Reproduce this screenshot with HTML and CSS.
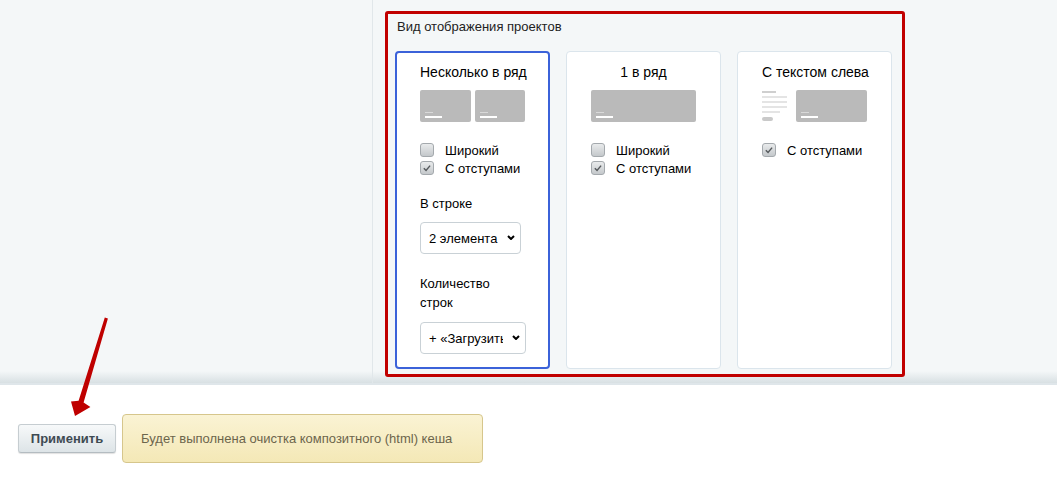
FILE: index.html
```html
<!DOCTYPE html>
<html lang="ru">
<head>
  <meta charset="UTF-8">
  <meta name="viewport" content="width=device-width, initial-scale=1.0">
  <title>Вид отображения проектов</title>
  <link rel="stylesheet" href="styles.css">
</head>
<body>

  <div class="workarea">
    <div class="sidebar"></div>

    <div class="content">
      <div class="panel">
        <div class="panel-title">Вид отображения проектов</div>

        <div class="views">
          <!-- несколько в ряд -->
          <div class="view active">
            <div class="view-title">Несколько в ряд</div>
            <div class="preview">
              <div class="thumb"><i class="l1"></i><i class="l2"></i></div>
              <div class="thumb"><i class="l1"></i><i class="l2"></i></div>
            </div>
            <div class="checks">
              <label class="check"><span class="box"></span>Широкий</label>
              <label class="check">
                <span class="box checked"><svg viewBox="0 0 14 14"><path d="M3.3 7.2 L5.9 9.8 L10.6 4.2"/></svg></span>С отступами
              </label>
            </div>
            <div class="field-label">В строке</div>
            <div class="select-wrap w1">
              <select class="select"><option>2 элемента</option></select>
              <svg class="chevron" viewBox="0 0 8 5"><path d="M1 1 L4 4 L7 1"/></svg>
            </div>
            <div class="field-label two">Количество<br>строк</div>
            <div class="select-wrap w2">
              <select class="select"><option>+ «Загрузить ещё»</option></select>
              <svg class="chevron" viewBox="0 0 8 5"><path d="M1 1 L4 4 L7 1"/></svg>
            </div>
          </div>

          <!-- 1 в ряд -->
          <div class="view">
            <div class="view-title">1 в ряд</div>
            <div class="preview">
              <div class="thumb"><i class="l1"></i><i class="l2"></i></div>
            </div>
            <div class="checks">
              <label class="check"><span class="box"></span>Широкий</label>
              <label class="check">
                <span class="box checked"><svg viewBox="0 0 14 14"><path d="M3.3 7.2 L5.9 9.8 L10.6 4.2"/></svg></span>С отступами
              </label>
            </div>
          </div>

          <!-- с текстом слева -->
          <div class="view">
            <div class="view-title">С текстом слева</div>
            <div class="preview">
              <div class="textlines">
                <i class="t-head"></i>
                <i class="t-line"></i>
                <i class="t-line"></i>
                <i class="t-line"></i>
                <i class="t-line short"></i>
                <i class="t-btn"></i>
              </div>
              <div class="thumb"><i class="l1"></i><i class="l2"></i></div>
            </div>
            <div class="checks">
              <label class="check">
                <span class="box checked"><svg viewBox="0 0 14 14"><path d="M3.3 7.2 L5.9 9.8 L10.6 4.2"/></svg></span>С отступами
              </label>
            </div>
          </div>
        </div>
      </div>
    </div>
  </div>

  <div class="footer">
    <button class="btn-apply">Применить</button>
    <div class="notice">Будет выполнена очистка композитного (html) кеша</div>
  </div>

  <svg class="arrow" viewBox="0 0 60 120">
    <polygon points="44.8,12.6 47.9,13.6 23.6,97.4 30.4,102 15,111 11,96.6 18.6,95.8"/>
  </svg>

</body>
</html>
```

FILE: styles.css
```css
body {
  margin: 0;
  background-color: #fff;
  font-family: "Liberation Sans", Arial, sans-serif;
  color: #000;
}

.workarea {
  display: flex;
  height: 385px;
  box-sizing: border-box;
  border-bottom: 2px solid #dfe6ea;
  background: linear-gradient(to bottom, #f4f7f8 0, #f4f7f8 371px, #d8e0e3 383px);
}

.sidebar {
  flex: none;
  width: 373px;
  box-sizing: border-box;
  border-right: 1px solid #e1e7ea;
}

.content {
  padding: 11px 0 0 12px;
}

.panel {
  width: 520px;
  box-sizing: border-box;
  border: 3px solid #c10000;
  border-radius: 3px;
  padding: 5px 10px 5px 7px;
  background-color: #f4f7f8;
}

.panel-title {
  font-size: 13px;
  line-height: 16px;
  color: #222;
  padding-left: 2px;
  margin-bottom: 16px;
}

.views {
  display: flex;
  gap: 16px;
}

.view {
  width: 155px;
  box-sizing: border-box;
  background-color: #fff;
  border: 1px solid #dbe5ec;
  border-radius: 4px;
  padding: 12px 24px 14px;
}

.view.active {
  border: 2px solid #3b62d9;
  padding: 11px 23px 13px;
}

.view-title {
  font-size: 14px;
  line-height: 17px;
  text-align: center;
  white-space: nowrap;
}

.preview {
  display: flex;
  gap: 4px;
  height: 32px;
  margin-top: 9px;
}

.thumb {
  flex: 1;
  display: flex;
  flex-direction: column;
  justify-content: flex-end;
  align-items: flex-start;
  padding: 0 0 4px 5px;
  background-color: #bababa;
  border-radius: 2px;
}

.thumb i {
  display: block;
}

.thumb .l1 {
  width: 8px;
  height: 1px;
  margin-bottom: 3px;
  background-color: #d9d9d9;
}

.thumb .l2 {
  width: 17px;
  height: 2px;
  background-color: #fff;
}

.textlines {
  flex: none;
  width: 25px;
  margin-right: 5px;
  display: flex;
  flex-direction: column;
  align-items: flex-start;
}

.textlines i {
  display: block;
}

.t-head {
  width: 14px;
  height: 2px;
  margin-top: 1px;
  background-color: #cfcfcf;
}

.t-line {
  width: 25px;
  height: 2px;
  margin-top: 3px;
  background-color: #e4e4e4;
}

.t-line.short {
  width: 18px;
}

.t-btn {
  width: 11px;
  height: 4px;
  margin-top: 4px;
  border-radius: 2px;
  background-color: #c9c9c9;
}

.checks {
  margin-top: 19px;
}

.check {
  display: flex;
  align-items: center;
  height: 18px;
  font-size: 13px;
  white-space: nowrap;
}

.box {
  flex: none;
  width: 14px;
  height: 14px;
  box-sizing: border-box;
  margin-right: 11px;
  border: 1px solid #a4a9ad;
  border-radius: 3px;
  background: linear-gradient(to bottom, #e9ebec, #c4c8cb);
}

.box svg {
  display: block;
  width: 12px;
  height: 12px;
}

.box svg path {
  fill: none;
  stroke: #55595c;
  stroke-width: 1.7;
}

.field-label {
  margin-top: 19px;
  font-size: 13px;
  line-height: 16px;
}

.field-label.two {
  margin-top: 20px;
  line-height: 19px;
}

.select-wrap {
  position: relative;
  margin-top: 10px;
  height: 32px;
}

.select-wrap.w1 {
  width: 101px;
}

.select-wrap.w2 {
  width: 106px;
}

.select {
  appearance: none;
  -webkit-appearance: none;
  width: 100%;
  height: 32px;
  box-sizing: border-box;
  padding: 0 22px 0 8px;
  border: 1px solid #c9d1d6;
  border-radius: 4px;
  background-color: #fff;
  font-family: "Liberation Sans", Arial, sans-serif;
  font-size: 13px;
  color: #000;
}

.chevron {
  position: absolute;
  right: 6px;
  top: 13px;
  width: 8px;
  height: 5px;
  pointer-events: none;
}

.chevron path {
  fill: none;
  stroke: #000;
  stroke-width: 2;
}

.footer {
  display: flex;
  align-items: center;
  gap: 6px;
  padding: 29px 18px 0;
}

.btn-apply {
  width: 98px;
  height: 29px;
  border: 1px solid #c6cdd1;
  border-bottom-color: #b4bcc1;
  border-radius: 3px;
  background: linear-gradient(to bottom, #f7f9fa, #dde4e7);
  box-shadow: 0 1px 1px rgba(0, 0, 0, 0.12);
  font-family: "Liberation Sans", Arial, sans-serif;
  font-size: 13px;
  font-weight: bold;
  color: #3e4a52;
  cursor: pointer;
}

.notice {
  display: flex;
  align-items: center;
  width: 361px;
  height: 49px;
  box-sizing: border-box;
  padding: 0 18px;
  border: 1px solid #d6c68c;
  border-radius: 4px;
  background: linear-gradient(to bottom, #faf3d4, #f4e8b6);
  font-size: 13px;
  color: #6c654c;
  white-space: nowrap;
}

.arrow {
  position: absolute;
  left: 60px;
  top: 305px;
  width: 60px;
  height: 120px;
}

.arrow polygon {
  fill: #bf0000;
}
```
